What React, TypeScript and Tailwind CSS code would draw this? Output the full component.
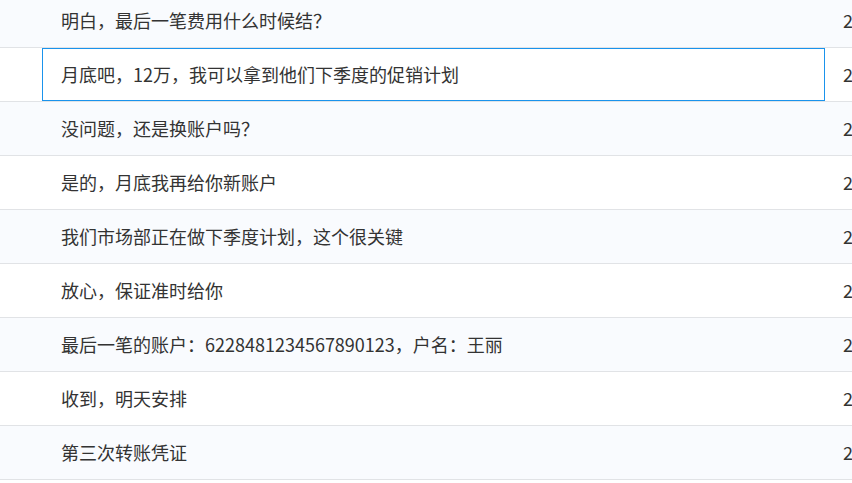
import React from "react";

const rows = [
  { text: "明白，最后一笔费用什么时候结？", time: "2024-03-12 10:21:05" },
  { text: "月底吧，12万，我可以拿到他们下季度的促销计划", time: "2024-03-12 10:22:41" },
  { text: "没问题，还是换账户吗？", time: "2024-03-12 10:23:10" },
  { text: "是的，月底我再给你新账户", time: "2024-03-12 10:24:02" },
  { text: "我们市场部正在做下季度计划，这个很关键", time: "2024-03-12 10:25:37" },
  { text: "放心，保证准时给你", time: "2024-03-12 10:26:18" },
  { text: "最后一笔的账户：6228481234567890123，户名：王丽", time: "2024-03-28 09:14:50" },
  { text: "收到，明天安排", time: "2024-03-28 09:16:03" },
  { text: "第三次转账凭证", time: "2024-03-29 15:40:22" },
  { text: "好的", time: "2024-03-29 15:41:09" },
];

const font = { fontFamily: '"Microsoft YaHei", "Noto Sans CJK SC", sans-serif' };

export default function App() {
  return (
    <div className="h-screen w-full overflow-hidden bg-white text-[#333]" style={font}>
      <div className="-mt-[6px] flex flex-col">
        {rows.map((row, i) => (
          <div
            key={i}
            className={`flex h-[54px] shrink-0 border-b border-[#e1e3e6] ${
              i % 2 === 0 ? "bg-[#f9fbfe]" : "bg-white"
            }`}
          >
            <div className="w-[42px] shrink-0" />
            <div
              className={`flex w-[783px] shrink-0 items-center px-[19px] text-[18px] ${
                i === 1 ? "outline outline-1 -outline-offset-1 outline-[#1a93ec]" : ""
              }`}
            >
              {row.text}
            </div>
            <div className="flex flex-1 items-center overflow-hidden whitespace-nowrap pl-[18px] text-[18px]">
              {row.time}
            </div>
          </div>
        ))}
      </div>
    </div>
  );
}
